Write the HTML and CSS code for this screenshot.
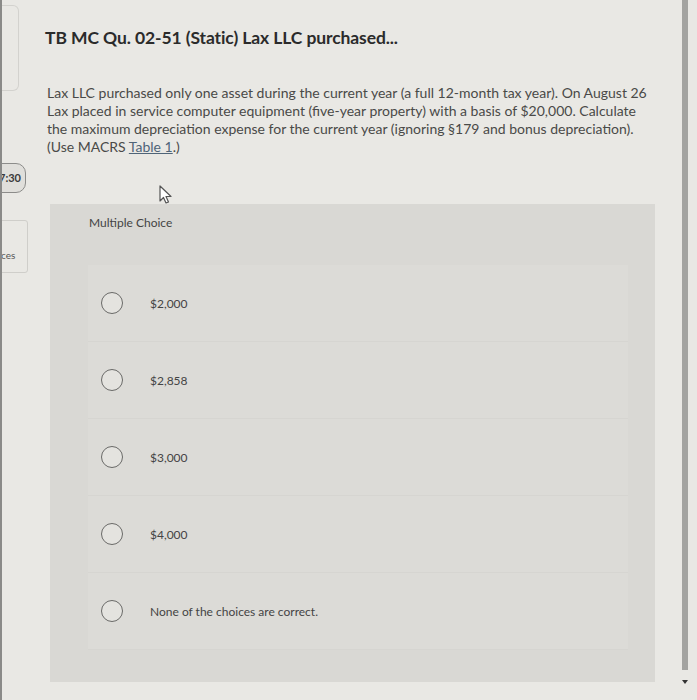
FILE: index.html
```html
<!DOCTYPE html>
<html lang="en">

<head>
    <meta charset="utf-8">
    <meta name="viewport" content="width=device-width, initial-scale=1.0">
    <title>TB MC Qu. 02-51</title>
    <link rel="stylesheet" href="styles.css">
</head>

<body>
    <div class="page">
        <aside class="side">
            <div class="side_card"></div>
            <div class="timer">7:30</div>
            <div class="side_tab">ces</div>
        </aside>

        <main class="question">
            <h1>TB MC Qu. 02-51 (Static) Lax LLC purchased...</h1>
            <p class="prompt">Lax LLC purchased only one asset during the current year (a full 12-month tax year). On August 26<br>
                Lax placed in service computer equipment (five-year property) with a basis of $20,000. Calculate<br>
                the maximum depreciation expense for the current year (ignoring §179 and bonus depreciation).<br>
                (Use MACRS <a href="#">Table 1</a>.)</p>

            <svg class="cursor" width="16" height="20" viewBox="0 0 16 20">
                <path d="M2 1 L2 16 L5.5 12.5 L8 18 L10.5 17 L8 11.5 L13 11.5 Z" fill="#fff" stroke="#555" stroke-width="1.2" stroke-linejoin="round" />
            </svg>

            <section class="choice_panel">
                <h2>Multiple Choice</h2>
                <ul class="choices">
                    <li><span class="radio"></span>$2,000</li>
                    <li><span class="radio"></span>$2,858</li>
                    <li><span class="radio"></span>$3,000</li>
                    <li><span class="radio"></span>$4,000</li>
                    <li><span class="radio"></span>None of the choices are correct.</li>
                </ul>
            </section>
        </main>

        <div class="scroll">
            <div class="scroll_thumb"></div>
            <div class="scroll_arrow"></div>
        </div>
    </div>
</body>

</html>
```

FILE: styles.css
```css
* {
    box-sizing: border-box;
}

body {
    margin: 0;
    background: #e9e8e4;
    font-family: Lato, 'Open Sans', sans-serif;
    color: #3d3d3d;
}

.page {
    display: flex;
    height: 700px;
    overflow: hidden;
    border-left: 2px solid #8a8a88;
}

/* left strip, cut off by the window edge */
.side {
    width: 27px;
    flex-shrink: 0;
    overflow: hidden;
}

.side_card {
    height: 86px;
    margin-top: 5px;
    border: 1px solid #d3d2ce;
    border-left: none;
    border-radius: 0 6px 6px 0;
    width: 17px;
}

.timer {
    margin: 72px 0 0 -14px;
    width: 38px;
    height: 30px;
    border: 1.5px solid #8c8c8a;
    border-radius: 10px;
    background: #e0dfdb;
    font-size: 11px;
    font-weight: 700;
    line-height: 27px;
    text-align: right;
    padding-right: 4px;
    color: #3a3a3a;
}

.side_tab {
    margin: 27px 0 0 -10px;
    width: 36px;
    height: 53px;
    border: 1px solid #cfceca;
    border-radius: 3px;
    font-size: 10px;
    padding: 28px 0 0 8px;
    color: #555;
}

.question {
    flex: 1;
    margin-left: 16px;
    position: relative;
}

h1 {
    font-size: 17.5px;
    font-weight: 700;
    margin: 26px 0 0;
    line-height: 24px;
    color: #2b2b2b;
    letter-spacing: -0.1px;
}

.prompt {
    font-size: 14px;
    line-height: 18px;
    margin: 34px 0 0 2px;
    white-space: nowrap;
    color: #4a4a48;
}

.prompt a {
    color: #4f6478;
}

.cursor {
    position: absolute;
    left: 113px;
    top: 185px;
}

.choice_panel {
    margin: 48px 0 0 5px;
    width: 605px;
    height: 478px;
    background: #d9d8d4;
    padding: 12px 0 0 39px;
}

h2 {
    font-size: 12px;
    font-weight: 400;
    margin: 0;
    color: #444;
    line-height: 14px;
}

.choices {
    list-style: none;
    margin: 35px 0 0 -1px;
    padding: 0;
    width: 540px;
    background: #dcdbd7;
}

.choices li {
    height: 77px;
    display: flex;
    align-items: center;
    font-size: 12px;
    color: #444;
    border-bottom: 1px solid #d6d5d1;
}

.radio {
    width: 22px;
    height: 22px;
    border: 1.5px solid #6a6a68;
    border-radius: 50%;
    margin: 0 27px 0 13px;
    background: #e4e3df;
}

.scroll {
    width: 14px;
    flex-shrink: 0;
    margin-right: 5px;
    display: flex;
    flex-direction: column;
    align-items: center;
}

.scroll_thumb {
    width: 6px;
    height: 670px;
    background: #a3a3a0;
}

.scroll_arrow {
    margin-top: 10px;
    width: 0;
    height: 0;
    border-left: 3px solid transparent;
    border-right: 3px solid transparent;
    border-top: 4px solid #333;
}
```
